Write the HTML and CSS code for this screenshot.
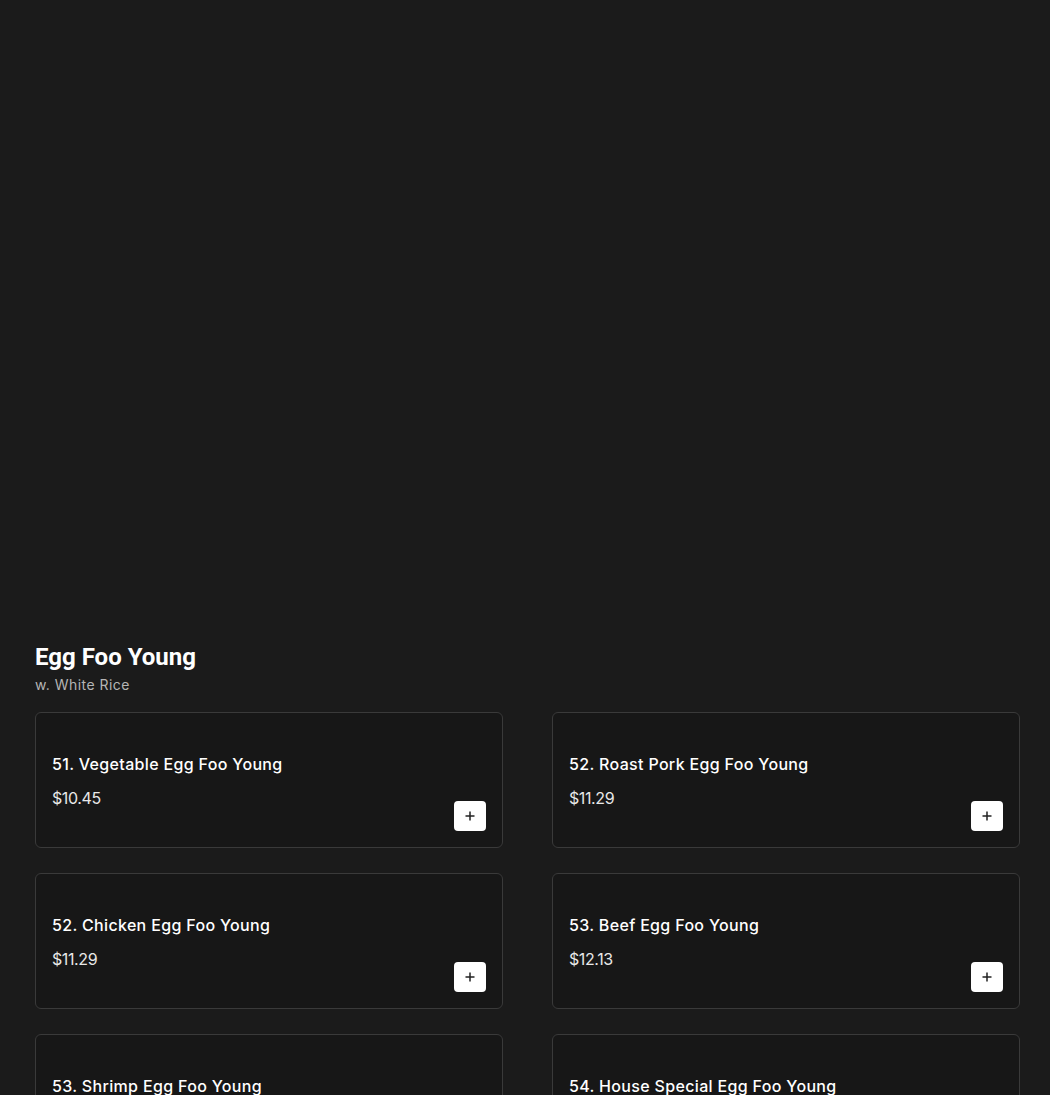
FILE: index.html
```html
<!DOCTYPE html>
<html>
<head>
<meta charset="utf-8">
<link rel="stylesheet" href="styles.css">
</head>
<body>
<div class="page">
  <div class="hero"></div>
  <section class="section">
    <h2 class="section-title">Egg Foo Young</h2>
    <p class="section-sub">w. White Rice</p>
    <div class="grid">
      <div class="card">
        <div class="info"><div class="name">51. Vegetable Egg Foo Young</div><div class="price">$10.45</div></div>
        <button class="add"><svg width="12" height="12" viewBox="0 0 12 12"><path d="M6 1.5v9M1.5 6h9" stroke="#222" stroke-width="1.5"/></svg></button>
      </div>
      <div class="card">
        <div class="info"><div class="name">52. Roast Pork Egg Foo Young</div><div class="price">$11.29</div></div>
        <button class="add"><svg width="12" height="12" viewBox="0 0 12 12"><path d="M6 1.5v9M1.5 6h9" stroke="#222" stroke-width="1.5"/></svg></button>
      </div>
      <div class="card">
        <div class="info"><div class="name">52. Chicken Egg Foo Young</div><div class="price">$11.29</div></div>
        <button class="add"><svg width="12" height="12" viewBox="0 0 12 12"><path d="M6 1.5v9M1.5 6h9" stroke="#222" stroke-width="1.5"/></svg></button>
      </div>
      <div class="card">
        <div class="info"><div class="name">53. Beef Egg Foo Young</div><div class="price">$12.13</div></div>
        <button class="add"><svg width="12" height="12" viewBox="0 0 12 12"><path d="M6 1.5v9M1.5 6h9" stroke="#222" stroke-width="1.5"/></svg></button>
      </div>
      <div class="card">
        <div class="info"><div class="name">53. Shrimp Egg Foo Young</div><div class="price">$12.13</div></div>
        <button class="add"><svg width="12" height="12" viewBox="0 0 12 12"><path d="M6 1.5v9M1.5 6h9" stroke="#222" stroke-width="1.5"/></svg></button>
      </div>
      <div class="card">
        <div class="info"><div class="name">54. House Special Egg Foo Young</div><div class="price">$12.97</div></div>
        <button class="add"><svg width="12" height="12" viewBox="0 0 12 12"><path d="M6 1.5v9M1.5 6h9" stroke="#222" stroke-width="1.5"/></svg></button>
      </div>
    </div>
  </section>
</div>
</body>
</html>
```
FILE: styles.css
```css
html, body {
  margin: 0;
  padding: 0;
  background: #1b1b1b;
}
body {
  font-family: Inter, "Open Sans", "Liberation Sans", sans-serif;
  color: #fff;
}
.page {
  padding: 0 30px 0 35px;
}
.hero {
  height: 643px;
}
.section-title {
  margin: 0;
  font-family: Roboto, "Liberation Sans", sans-serif;
  font-weight: 700;
  font-size: 24px;
  line-height: 28px;
  color: #fff;
}
.section-sub {
  margin: 0;
  font-size: 14px;
  line-height: 28px;
  color: #b5b5b5;
  letter-spacing: 0.45px;
}
.grid {
  margin-top: 13px;
  display: grid;
  grid-template-columns: 468px 468px;
  column-gap: 49px;
  row-gap: 25px;
}
.card {
  box-sizing: border-box;
  height: 136px;
  background: #171717;
  border: 1px solid #3a3a3a;
  border-radius: 6px;
  padding: 39px 16px 16px 16px;
  display: flex;
}
.info {
  flex: 1;
}
.name {
  font-size: 16px;
  font-weight: 500;
  line-height: 24px;
  color: #fff;
  letter-spacing: 0.33px;
}
.price {
  margin-top: 10px;
  font-size: 16px;
  line-height: 24px;
  color: #e8e8e8;
  letter-spacing: -0.4px;
}
.add {
  align-self: flex-end;
  width: 32px;
  height: 30px;
  border: none;
  border-radius: 4px;
  background: #fff;
  padding: 0;
  display: flex;
  align-items: center;
  justify-content: center;
}
```
